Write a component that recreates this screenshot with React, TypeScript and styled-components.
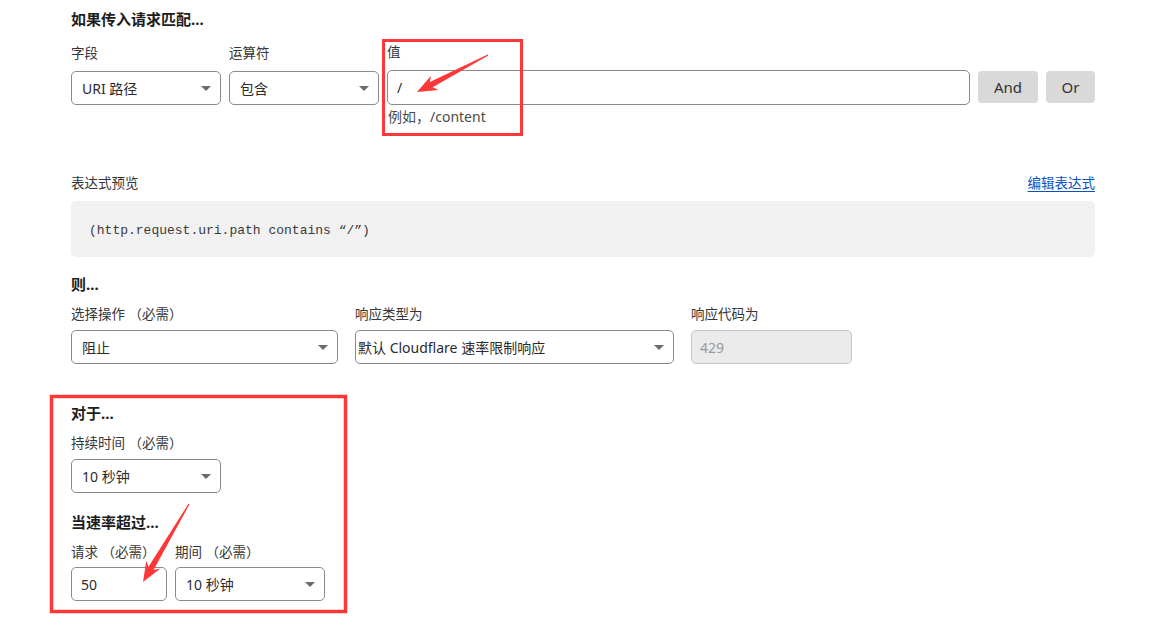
import React from 'react';
import styled, { createGlobalStyle } from 'styled-components';

const GlobalStyle = createGlobalStyle`
  html, body {
    margin: 0;
    padding: 0;
    background: #ffffff;
  }
  body {
    font-family: "Noto Sans", "Noto Sans CJK SC", sans-serif;
    color: #313131;
  }
`;

const Page = styled.div`
  position: relative;
  width: 1161px;
  height: 625px;
  box-sizing: border-box;
  padding: 8px 0 0 71px;
  overflow: hidden;
`;

const Form = styled.div`
  width: 1024px;
  display: flex;
  flex-direction: column;
`;

const SectionTitle = styled.h3<{ $top?: number }>`
  margin: ${(p) => p.$top ?? 0}px 0 0;
  font-size: 15px;
  line-height: 22px;
  font-weight: 700;
  color: #1d1d1d;
`;

const Row = styled.div<{ $gap: number; $top?: number }>`
  display: flex;
  align-items: flex-end;
  gap: ${(p) => p.$gap}px;
  margin-top: ${(p) => p.$top ?? 0}px;
`;

const Field = styled.div<{ $width?: number; $grow?: boolean }>`
  display: flex;
  flex-direction: column;
  width: ${(p) => (p.$width ? `${p.$width}px` : 'auto')};
  flex: ${(p) => (p.$grow ? '1 1 auto' : '0 0 auto')};
`;

const Label = styled.label<{ $gap?: number }>`
  font-size: 13.5px;
  line-height: 20px;
  color: #363636;
  margin-bottom: ${(p) => p.$gap ?? 6}px;
  white-space: nowrap;
`;

const SelectBox = styled.div<{ $pad?: number }>`
  box-sizing: border-box;
  height: 34px;
  display: flex;
  align-items: center;
  justify-content: space-between;
  padding: 0 9px 0 ${(p) => p.$pad ?? 10}px;
  border: 1px solid #8a8a8a;
  border-radius: 5px;
  background: #fff;
  font-size: 14px;
  color: #2b2b2b;
  white-space: nowrap;
`;

const Caret = styled.span`
  width: 0;
  height: 0;
  border-left: 5px solid transparent;
  border-right: 5px solid transparent;
  border-top: 5px solid #6b6b6b;
  flex: 0 0 auto;
`;

const TextInput = styled.input<{ $height?: number }>`
  box-sizing: border-box;
  width: 100%;
  height: ${(p) => p.$height ?? 34}px;
  margin: 0;
  padding: 0 9px;
  border: 1px solid #8a8a8a;
  border-radius: 5px;
  background: #fff;
  font-family: inherit;
  font-size: 14px;
  color: #2b2b2b;
  outline: none;

  &:disabled {
    background: #ebebeb;
    border-color: #c6c6c6;
    color: #9a9a9a;
    padding-left: 8px;
  }
`;

const Hint = styled.div`
  font-size: 14px;
  line-height: 20px;
  color: #4a4a4a;
  margin-top: 2px;
  padding-left: 1px;
`;

const LogicButton = styled.button<{ $width: number }>`
  width: ${(p) => p.$width}px;
  height: 32px;
  margin-bottom: 2px;
  border: none;
  border-radius: 4px;
  background: #d9d9d9;
  font-family: inherit;
  font-size: 15px;
  color: #333;
  padding: 0;
`;

const PreviewHead = styled.div`
  display: flex;
  justify-content: space-between;
  align-items: center;
  margin-top: 46px;
  height: 20px;
`;

const EditLink = styled.a`
  font-size: 13.5px;
  line-height: 20px;
  color: #0a52c4;
  text-decoration: underline;
  text-underline-offset: 3px;
  cursor: pointer;
`;

const CodeBlock = styled.div`
  margin-top: 8px;
  height: 56px;
  display: flex;
  align-items: center;
  padding: 2px 0 0 18px;
  box-sizing: border-box;
  border-radius: 5px;
  background: #f1f1f1;
  font-family: "Liberation Mono", "DejaVu Sans Mono", monospace;
  font-size: 13px;
  color: #3a3a3a;
`;

const Annotations = styled.svg`
  position: absolute;
  left: 0;
  top: 0;
  width: 1161px;
  height: 625px;
  pointer-events: none;
`;

const RED = '#fd3838';

// polygon for a hand-drawn markup arrow: thin tail widening toward a barbed head
function arrowPoints(tail: [number, number], tip: [number, number], head = 20, half = 8) {
  const dx = tail[0] - tip[0];
  const dy = tail[1] - tip[1];
  const len = Math.hypot(dx, dy);
  const ux = dx / len;
  const uy = dy / len;
  const px = -uy;
  const py = ux;
  const at = (d: number, s: number) => [tip[0] + ux * d + px * s, tip[1] + uy * d + py * s];
  const pts = [
    at(len, 0.6),
    at(head * 0.8, 3),
    at(head, half),
    [tip[0], tip[1]],
    at(head, -half),
    at(head * 0.8, -3),
    at(len, -0.6),
  ];
  return pts.map((p) => p.map((v) => v.toFixed(1)).join(',')).join(' ');
}

function Select({ value, width, pad }: { value: string; width?: number; pad?: number }) {
  return (
    <SelectBox $pad={pad} style={width ? { width } : undefined}>
      <span>{value}</span>
      <Caret />
    </SelectBox>
  );
}

export default function App() {
  return (
    <>
      <GlobalStyle />
      <Page>
        <Form>
          <SectionTitle>如果传入请求匹配...</SectionTitle>

          <Row $gap={8} $top={12}>
            <Field $width={150}>
              <Label $gap={8}>字段</Label>
              <Select value="URI 路径" />
            </Field>
            <Field $width={150}>
              <Label $gap={8}>运算符</Label>
              <Select value="包含" />
            </Field>
            <Field $grow>
              <Label $gap={8}>值</Label>
              <TextInput $height={35} defaultValue="/" readOnly />
            </Field>
            <LogicButton $width={60}>And</LogicButton>
            <LogicButton $width={49}>Or</LogicButton>
          </Row>
          <Row $gap={0}>
            <Field $width={316} />
            <Hint>例如，/content</Hint>
          </Row>

          <PreviewHead>
            <Label $gap={0}>表达式预览</Label>
            <EditLink>编辑表达式</EditLink>
          </PreviewHead>
          <CodeBlock>(http.request.uri.path contains “/”)</CodeBlock>

          <SectionTitle $top={16}>则...</SectionTitle>
          <Row $gap={17} $top={9}>
            <Field $width={267}>
              <Label>选择操作 （必需）</Label>
              <Select value="阻止" />
            </Field>
            <Field $width={319}>
              <Label>响应类型为</Label>
              <Select value="默认 Cloudflare 速率限制响应" pad={2} />
            </Field>
            <Field $width={161}>
              <Label>响应代码为</Label>
              <TextInput defaultValue="429" disabled />
            </Field>
          </Row>

          <SectionTitle $top={38}>对于...</SectionTitle>
          <Row $gap={9} $top={9}>
            <Field $width={150}>
              <Label>持续时间 （必需）</Label>
              <Select value="10 秒钟" />
            </Field>
          </Row>

          <SectionTitle $top={18}>当速率超过...</SectionTitle>
          <Row $gap={8} $top={9}>
            <Field $width={96}>
              <Label $gap={5}>请求 （必需）</Label>
              <TextInput defaultValue="50" readOnly />
            </Field>
            <Field $width={150}>
              <Label $gap={5}>期间 （必需）</Label>
              <Select value="10 秒钟" />
            </Field>
          </Row>
        </Form>

        <Annotations viewBox="0 0 1161 625">
          <rect x="383.5" y="40.5" width="138" height="94" fill="none" stroke={RED} strokeWidth="3" />
          <rect x="51.5" y="396.5" width="294" height="215" fill="none" stroke={RED} strokeWidth="3.5" />
          <polygon points={arrowPoints([488, 55], [417, 92])} fill={RED} />
          <polygon points={arrowPoints([189, 504], [143, 582])} fill={RED} />
        </Annotations>
      </Page>
    </>
  );
}
